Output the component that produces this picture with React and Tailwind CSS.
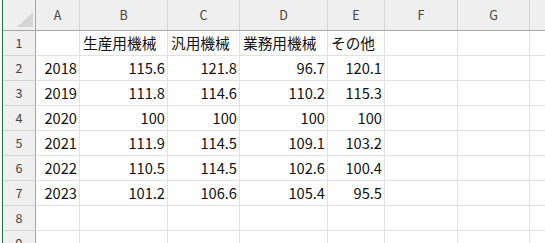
import React from "react";

const cols = [
  { key: "A", w: "w-[44px]" },
  { key: "B", w: "w-[88px]" },
  { key: "C", w: "w-[72px]" },
  { key: "D", w: "w-[88px]" },
  { key: "E", w: "w-[57px]" },
  { key: "F", w: "w-[73px]" },
  { key: "G", w: "w-[72px]" },
  { key: "", w: "w-[72px]" },
];

const rows = [
  ["", "生産用機械", "汎用機械", "業務用機械", "その他"],
  ["2018", "115.6", "121.8", "96.7", "120.1"],
  ["2019", "111.8", "114.6", "110.2", "115.3"],
  ["2020", "100", "100", "100", "100"],
  ["2021", "111.9", "114.5", "109.1", "103.2"],
  ["2022", "110.5", "114.5", "102.6", "100.4"],
  ["2023", "101.2", "106.6", "105.4", "95.5"],
  ["", "", "", "", ""],
  ["", "", "", "", ""],
];

const font = { fontFamily: '"Noto Sans CJK JP", "Noto Sans", sans-serif' };

const App = () => {
  return (
    <div className="w-[545px] h-[243px] overflow-hidden bg-white flex" style={font}>
      {/* left edge */}
      <div className="w-[2px] shrink-0 bg-[#f7f7f7]" />
      <div className="w-[1px] shrink-0 bg-[#217346]" />

      <div className="flex flex-col">
        {/* Column headers */}
        <div className="flex h-[31px] shrink-0 bg-[#efefef] border-b border-[#a6a6a6]">
          <div className="relative w-[33px] shrink-0 border-r border-[#a6a6a6]">
            <div className="absolute right-[2px] bottom-[3px] w-0 h-0 border-l-[16px] border-l-transparent border-b-[15px] border-b-[#d6d6d6]" />
          </div>
          {cols.map((c, j) => (
            <div
              key={j}
              className={`${c.w} shrink-0 flex items-center justify-center border-r border-[#d4d4d4] text-[12.5px] text-[#444]`}
            >
              {c.key}
            </div>
          ))}
        </div>

        {/* Rows */}
        {rows.map((r, i) => (
          <div key={i} className="flex h-[25px] shrink-0">
            <div className="w-[33px] shrink-0 flex items-center justify-center bg-[#efefef] border-r border-b border-r-[#a6a6a6] border-b-[#d4d4d4] text-[12.5px] text-[#444]">
              {i + 1}
            </div>
            {cols.map((c, j) => {
              const v = r[j] || "";
              const isText = i === 0;
              return (
                <div
                  key={j}
                  className={`${c.w} shrink-0 flex items-center border-r border-b border-[#e1e1e1] text-[14.67px] leading-none text-[#111] whitespace-nowrap ${
                    isText ? "justify-start pl-[3px]" : "justify-end pr-[2px]"
                  }`}
                >
                  {v}
                </div>
              );
            })}
          </div>
        ))}
      </div>
    </div>
  );
};

export default App;
